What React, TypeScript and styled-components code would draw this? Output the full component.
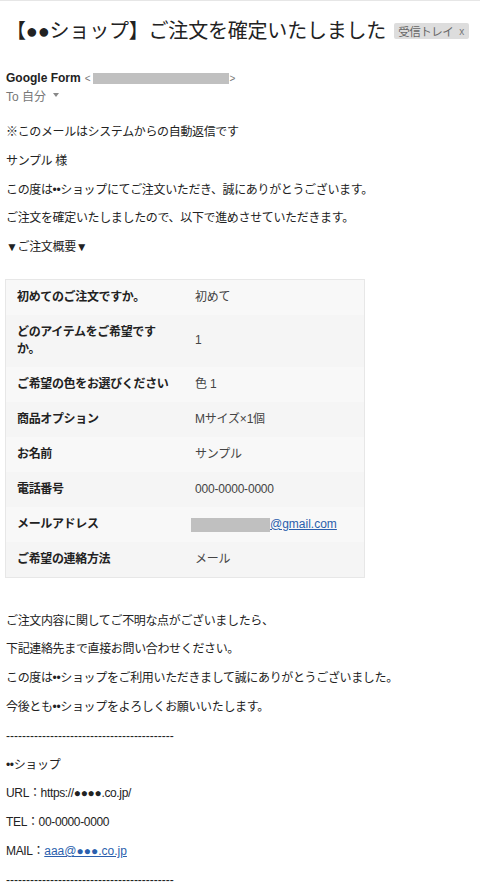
import React from "react";
import styled, { createGlobalStyle } from "styled-components";

const Global = createGlobalStyle`
  html, body { margin: 0; padding: 0; background: #fff; }
  body {
    font-family: "Liberation Sans", Arial, "Noto Sans CJK JP", sans-serif;
    color: #222;
  }
`;

const Page = styled.div`
  width: 480px;
  min-height: 883px;
  box-sizing: border-box;
  border-top: 1px solid #e6e6e6;
  padding: 0 6px;
`;

const TitleRow = styled.div`
  display: flex;
  align-items: center;
  gap: 8px;
  margin-top: 17px;
  height: 26px;
`;

const Title = styled.h1`
  margin: 0;
  font-size: 20px;
  font-weight: normal;
  line-height: 26px;
  color: #222;
  letter-spacing: -0.2px;
  white-space: nowrap;
`;

const Chip = styled.span`
  display: inline-flex;
  align-items: center;
  gap: 6px;
  height: 16px;
  padding: 0 5px 0 4px;
  background: #dddddd;
  border-radius: 2px;
  font-size: 11.5px;
  color: #666;
  white-space: nowrap;
  letter-spacing: -0.5px;
`;

const ChipX = styled.span`
  font-size: 10px;
  color: #777;
`;

const Sender = styled.div`
  display: flex;
  align-items: center;
  margin-top: 26px;
  height: 16px;
  font-size: 12px;
`;

const SenderName = styled.span`
  font-weight: bold;
  color: #222;
`;

const Angle = styled.span<{ $left?: number }>`
  color: #777;
  font-size: 10px;
  margin: 0 2px 0 ${(p) => p.$left ?? 1}px;
`;

const Redacted = styled.span<{ $w: number; $h: number }>`
  display: inline-block;
  width: ${(p) => p.$w}px;
  height: ${(p) => p.$h}px;
  background: #c0c0c0;
  vertical-align: middle;
`;

const ToLine = styled.div`
  display: flex;
  align-items: center;
  gap: 3px;
  margin-top: 1px;
  height: 16px;
  font-size: 12px;
  color: #777;
`;

const Caret = styled.span`
  display: inline-block;
  width: 0;
  height: 0;
  margin-left: 4px;
  border-left: 3.5px solid transparent;
  border-right: 3.5px solid transparent;
  border-top: 4px solid #888;
`;

const Body = styled.div`
  margin-top: 21px;
`;

const P = styled.p<{ $gap?: number }>`
  margin: ${(p) => p.$gap ?? 0}px 0 11.8px;
  height: 17px;
  font-size: 12px;
  line-height: 17px;
  color: #222;
  letter-spacing: -0.35px;
  white-space: nowrap;
`;

const Dashes = styled.p`
  margin: 0 0 11.8px;
  height: 17px;
  font-size: 12px;
  line-height: 17px;
  color: #222;
  letter-spacing: 0;
  white-space: nowrap;
`;

const Table = styled.table`
  border-collapse: collapse;
  margin: 22.5px 0 0 -1px;
  width: 360px;
  border: 1px solid #e7e7e7;
  background: #f8f8f8;
`;

const Tr = styled.tr`
  &:nth-child(even) {
    background: #f5f5f5;
  }
`;

const Label = styled.td`
  width: 160px;
  padding: 9px 10px 9px 11px;
  font-size: 12px;
  line-height: 17px;
  font-weight: bold;
  color: #222;
  vertical-align: middle;
  letter-spacing: -0.35px;
`;

const Value = styled.td`
  padding: 9px 8px;
  font-size: 12px;
  line-height: 17px;
  color: #444;
  vertical-align: middle;
  white-space: nowrap;
  letter-spacing: -0.2px;
`;

const Link = styled.a`
  color: #2b5fad;
  text-decoration: underline;
  letter-spacing: 0;
`;

const rows: [string, React.ReactNode][] = [
  ["初めてのご注文ですか。", "初めて"],
  ["どのアイテムをご希望ですか。", "1"],
  ["ご希望の色をお選びください", "色 1"],
  ["商品オプション", "Mサイズ×1個"],
  ["お名前", "サンプル"],
  ["電話番号", "000-0000-0000"],
  [
    "メールアドレス",
    <>
      <Redacted $w={79} $h={14} style={{ marginLeft: -4 }} />
      <Link href="#">@gmail.com</Link>
    </>,
  ],
  ["ご希望の連絡方法", "メール"],
];

const DASH = "-".repeat(42);

export default function App() {
  return (
    <>
      <Global />
      <Page>
        <TitleRow>
          <Title>【●●ショップ】ご注文を確定いたしました</Title>
          <Chip>
            受信トレイ<ChipX>x</ChipX>
          </Chip>
        </TitleRow>
        <Sender>
          <SenderName>Google Form</SenderName>
          <Angle $left={4}>&lt;</Angle>
          <Redacted $w={136} $h={11} />
          <Angle>&gt;</Angle>
        </Sender>
        <ToLine>
          To 自分<Caret />
        </ToLine>
        <Body>
          <P>※このメールはシステムからの自動返信です</P>
          <P>サンプル 様</P>
          <P>この度は••ショップにてご注文いただき、誠にありがとうございます。</P>
          <P>ご注文を確定いたしましたので、以下で進めさせていただきます。</P>
          <P>▼ご注文概要▼</P>
        </Body>
        <Table>
          <tbody>
            {rows.map(([k, v]) => (
              <Tr key={k}>
                <Label>{k}</Label>
                <Value>{v}</Value>
              </Tr>
            ))}
          </tbody>
        </Table>
        <P $gap={35}>ご注文内容に関してご不明な点がございましたら、</P>
        <P>下記連絡先まで直接お問い合わせください。</P>
        <P>この度は••ショップをご利用いただきまして誠にありがとうございました。</P>
        <P>今後とも••ショップをよろしくお願いいたします。</P>
        <Dashes>{DASH}</Dashes>
        <P>••ショップ</P>
        <P>URL：https://●●●●.co.jp/</P>
        <P>TEL：00-0000-0000</P>
        <P>
          MAIL：<Link href="#">aaa@●●●.co.jp</Link>
        </P>
        <Dashes>{DASH}</Dashes>
      </Page>
    </>
  );
}
